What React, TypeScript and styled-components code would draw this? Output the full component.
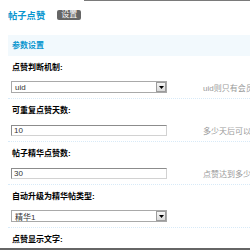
import React from 'react';
import styled, { createGlobalStyle } from 'styled-components';

const GlobalStyle = createGlobalStyle`
  html, body {
    margin: 0;
    padding: 0;
    background: #fff;
  }
  body {
    font-family: "Liberation Sans", "Noto Sans CJK SC", sans-serif;
  }
`;

const Page = styled.div`
  width: 250px;
  height: 250px;
  display: flex;
  flex-direction: column;
  overflow: hidden;
`;

const TopBar = styled.div`
  height: 29px;
  display: flex;
  align-items: center;
  padding-left: 8px;
  flex-shrink: 0;
`;

const Title = styled.h3`
  margin: 0;
  font-size: 9.3px;
  font-weight: 700;
  color: #0a96cf;
  white-space: nowrap;
`;

const Tab = styled.span`
  margin-left: 12px;
  height: 10px;
  line-height: 10px;
  padding: 0 4px;
  font-size: 8px;
  color: #fff;
  background: #666;
  border-radius: 2px;
  white-space: nowrap;
`;

/* thin rule along the top edge, right of the tabs */
const TopRule = styled.div`
  flex: 1;
  align-self: flex-start;
  margin-left: 3px;
  border-top: 1px solid #7a7a7a;
`;

const Content = styled.div`
  flex: 1;
  margin: 6px 0 0 8px;
  overflow: hidden;
`;

const Partition = styled.div`
  height: 21px;
  line-height: 21px;
  padding-left: 4px;
  background: #f2f9fd;
  font-size: 8px;
  font-weight: 700;
  color: #0a96cf;
`;

const Group = styled.div`
  border-bottom: 1px dotted #d8eaf8;
`;

const Label = styled.div`
  height: 12px;
  line-height: 12px;
  padding: 6px 0 6px 4px;
  font-size: 8px;
  font-weight: 700;
  color: #000;
  white-space: nowrap;
`;

const ControlRow = styled.div`
  display: flex;
  align-items: center;
  height: 12px;
  padding: 1px 0 5px 3px;
`;

const TextInput = styled.input`
  box-sizing: border-box;
  width: 156px;
  height: 11px;
  margin: 0;
  padding: 0 2px;
  font-family: inherit;
  font-size: 8px;
  color: #333;
  background: #fff;
  border: 1px solid;
  border-color: #8c8c8c #d2d2d2 #d2d2d2 #8c8c8c;
  outline: none;
  flex-shrink: 0;
`;

const Select = styled.div`
  box-sizing: border-box;
  width: 156px;
  height: 12px;
  display: flex;
  align-items: center;
  padding-left: 3px;
  border: 1px solid #a9a9a9;
  background: #fff;
  flex-shrink: 0;
`;

const SelectValue = styled.span`
  flex: 1;
  font-size: 8px;
  color: #333;
  white-space: nowrap;
`;

const SelectArrow = styled.span`
  box-sizing: border-box;
  width: 10px;
  height: 10px;
  display: flex;
  align-items: center;
  justify-content: center;
  border: 1px solid #9c9c9c;
  background: linear-gradient(#f6f6f6, #dadada);
`;

const Tip = styled.span`
  margin-left: 36px;
  font-size: 8px;
  color: #9a9a9a;
  white-space: nowrap;
`;

const BottomBar = styled.div`
  height: 2px;
  background: #666;
  flex-shrink: 0;
`;

type Row = {
  label: string;
  kind: 'select' | 'text';
  value: string;
  tip?: string;
};

const rows: Row[] = [
  { label: '点赞判断机制:', kind: 'select', value: 'uid', tip: 'uid则只有会员可以点赞，ip则游客也可以点赞' },
  { label: '可重复点赞天数:', kind: 'text', value: '10', tip: '多少天后可以再次点赞' },
  { label: '帖子精华点赞数:', kind: 'text', value: '30', tip: '点赞达到多少自动升级为精华帖' },
  { label: '自动升级为精华帖类型:', kind: 'select', value: '精华1' },
  { label: '点赞显示文字:', kind: 'text', value: '赞' },
];

function FakeSelect({ value }: { value: string }) {
  return (
    <Select>
      <SelectValue>{value}</SelectValue>
      <SelectArrow>
        <svg width="5" height="3" viewBox="0 0 5 3">
          <path d="M0 0h5L2.5 3z" fill="#000" />
        </svg>
      </SelectArrow>
    </Select>
  );
}

export default function App() {
  return (
    <Page>
      <GlobalStyle />
      <TopBar>
        <Title>帖子点赞</Title>
        <Tab>设置</Tab>
        <TopRule />
      </TopBar>
      <Content>
        <Partition>参数设置</Partition>
        {rows.map((row) => (
          <Group key={row.label}>
            <Label>{row.label}</Label>
            <ControlRow>
              {row.kind === 'select' ? (
                <FakeSelect value={row.value} />
              ) : (
                <TextInput defaultValue={row.value} readOnly />
              )}
              {row.tip && <Tip>{row.tip}</Tip>}
            </ControlRow>
          </Group>
        ))}
      </Content>
      <BottomBar />
    </Page>
  );
}
